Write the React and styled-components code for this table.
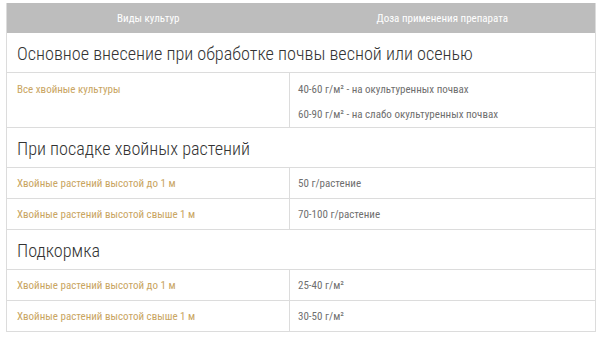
import React from "react";
import styled, { createGlobalStyle } from "styled-components";

const Global = createGlobalStyle`
  html, body { margin: 0; padding: 0; background: #fff; }
  body { font-family: "Roboto Condensed", Roboto, "Liberation Sans", sans-serif; }
`;

const Page = styled.div`
  padding: 3px 4px 0 6px;
`;

const Table = styled.table`
  width: 590px;
  border-collapse: collapse;
  table-layout: fixed;
  border: 1px solid #dcdcdc;
  border-top: none;
`;

const HeadCell = styled.th`
  background: #bdbdbd;
  color: #fff;
  font-weight: 400;
  font-size: 11px;
  height: 30px;
  padding: 0;
  text-align: center;
  vertical-align: middle;
`;

const SectionCell = styled.td`
  height: 37px;
  padding: 2px 10px 0;
  font-size: 18.2px;
  line-height: 22px;
  font-weight: 300;
  color: #333;
  border-bottom: 1px solid #dcdcdc;
  vertical-align: middle;
`;

const Cell = styled.td`
  padding: ${(p) => (p.$tall ? "10px 10px 0" : "0 10px")};
  height: ${(p) => (p.$tall ? "44px" : "30px")};
  font-size: 11px;
  color: ${(p) => (p.$name ? "#c9a562" : "#6f6f6f")};
  border-bottom: 1px solid #dcdcdc;
  border-right: 1px solid #dcdcdc;
  vertical-align: ${(p) => (p.$tall ? "top" : "middle")};
  padding-left: ${(p) => (p.$name ? "10px" : "8px")};
`;

const Line = styled.div`
  line-height: 13px;
  & + & { margin-top: 12px; }
`;

const sections = [
  {
    title: "Основное внесение при обработке почвы весной или осенью",
    rows: [
      {
        name: "Все хвойные культуры",
        dose: ["40-60 г/м² - на окультуренных почвах", "60-90 г/м² - на слабо окультуренных почвах"],
        tall: true,
      },
    ],
  },
  {
    title: "При посадке хвойных растений",
    rows: [
      { name: "Хвойные растений высотой до 1 м", dose: ["50 г/растение"] },
      { name: "Хвойные растений высотой свыше 1 м", dose: ["70-100 г/растение"] },
    ],
  },
  {
    title: "Подкормка",
    rows: [
      { name: "Хвойные растений высотой до 1 м", dose: ["25-40 г/м²"] },
      { name: "Хвойные растений высотой свыше 1 м", dose: ["30-50 г/м²"] },
    ],
  },
];

export default function App() {
  return (
    <Page>
      <Global />
      <Table>
        <colgroup>
          <col style={{ width: "283px" }} />
          <col />
        </colgroup>
        <thead>
          <tr>
            <HeadCell>Виды культур</HeadCell>
            <HeadCell>Доза применения препарата</HeadCell>
          </tr>
        </thead>
        <tbody>
          {sections.map((s, i) => (
            <React.Fragment key={i}>
              <tr>
                <SectionCell colSpan={2}>{s.title}</SectionCell>
              </tr>
              {s.rows.map((r, j) => (
                <tr key={j}>
                  <Cell $name $tall={r.tall}>
                    <Line>{r.name}</Line>
                  </Cell>
                  <Cell $tall={r.tall}>
                    {r.dose.map((d, k) => (
                      <Line key={k}>{d}</Line>
                    ))}
                  </Cell>
                </tr>
              ))}
            </React.Fragment>
          ))}
        </tbody>
      </Table>
    </Page>
  );
}
